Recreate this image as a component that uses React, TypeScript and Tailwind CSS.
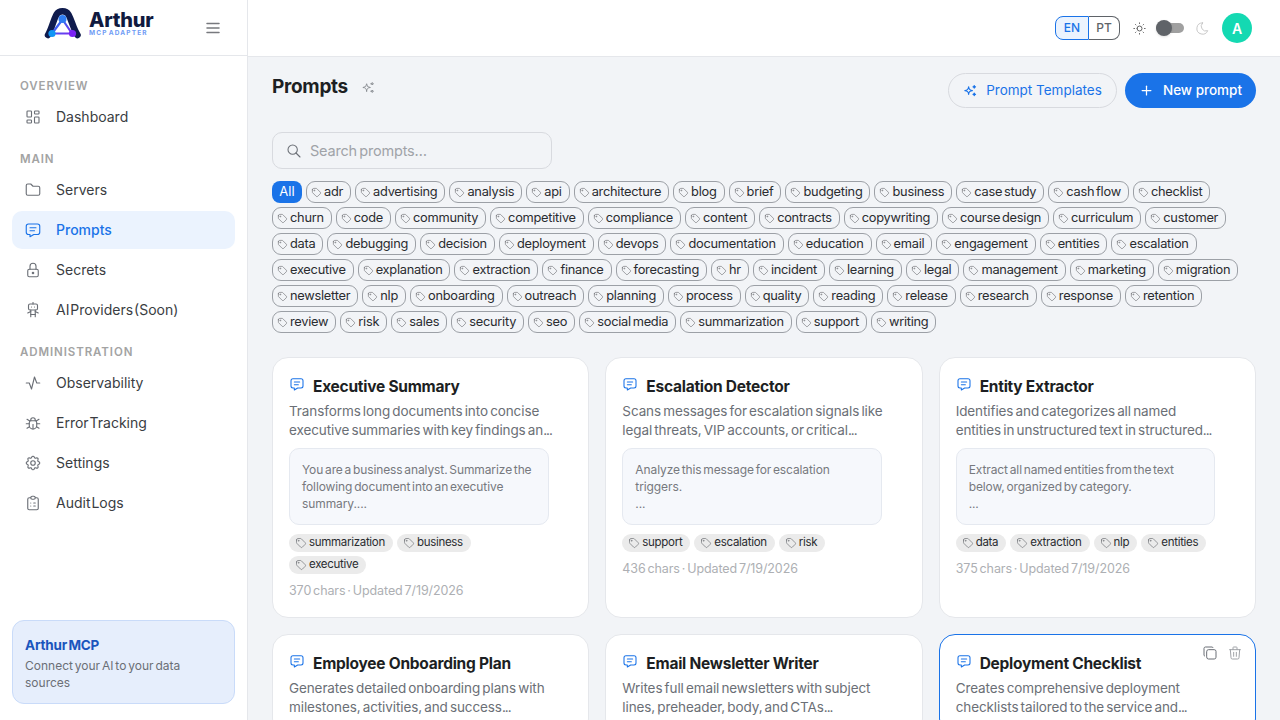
import React from 'react';
import {
  TbLayoutDashboard,
  TbFolder,
  TbMessage,
  TbLock,
  TbRobot,
  TbActivity,
  TbBug,
  TbSettings,
  TbClipboardList,
  TbTag,
  TbSun,
  TbMoon,
  TbSearch,
  TbSparkles,
  TbPlus,
  TbCopy,
  TbTrash,
  TbMenu2,
} from 'react-icons/tb';

const navSections = [
  { label: 'OVERVIEW', items: [{ name: 'Dashboard', icon: TbLayoutDashboard }] },
  {
    label: 'MAIN',
    items: [
      { name: 'Servers', icon: TbFolder },
      { name: 'Prompts', icon: TbMessage, active: true },
      { name: 'Secrets', icon: TbLock },
      { name: 'AI Providers (Soon)', icon: TbRobot },
    ],
  },
  {
    label: 'ADMINISTRATION',
    items: [
      { name: 'Observability', icon: TbActivity },
      { name: 'Error Tracking', icon: TbBug },
      { name: 'Settings', icon: TbSettings },
      { name: 'Audit Logs', icon: TbClipboardList },
    ],
  },
];

const tags = [
  'adr', 'advertising', 'analysis', 'api', 'architecture', 'blog', 'brief', 'budgeting', 'business', 'case study', 'cash flow', 'checklist',
  'churn', 'code', 'community', 'competitive', 'compliance', 'content', 'contracts', 'copywriting', 'course design', 'curriculum', 'customer',
  'data', 'debugging', 'decision', 'deployment', 'devops', 'documentation', 'education', 'email', 'engagement', 'entities', 'escalation',
  'executive', 'explanation', 'extraction', 'finance', 'forecasting', 'hr', 'incident', 'learning', 'legal', 'management', 'marketing', 'migration',
  'newsletter', 'nlp', 'onboarding', 'outreach', 'planning', 'process', 'quality', 'reading', 'release', 'research', 'response', 'retention',
  'review', 'risk', 'sales', 'security', 'seo', 'social media', 'summarization', 'support', 'writing',
];

// desc holds the two visible lines, the second one is cut off with dots
const prompts = [
  {
    title: 'Executive Summary',
    desc: ['Transforms long documents into concise', 'executive summaries with key findings an'],
    body: ['You are a business analyst. Summarize the', 'following document into an executive', 'summary....'],
    tags: ['summarization', 'business', 'executive'],
    meta: '370 chars · Updated 7/19/2026',
  },
  {
    title: 'Escalation Detector',
    desc: ['Scans messages for escalation signals like', 'legal threats, VIP accounts, or critical'],
    body: ['Analyze this message for escalation', 'triggers.', '...'],
    tags: ['support', 'escalation', 'risk'],
    meta: '436 chars · Updated 7/19/2026',
  },
  {
    title: 'Entity Extractor',
    desc: ['Identifies and categorizes all named', 'entities in unstructured text in structured'],
    body: ['Extract all named entities from the text', 'below, organized by category.', '...'],
    tags: ['data', 'extraction', 'nlp', 'entities'],
    meta: '375 chars · Updated 7/19/2026',
  },
  {
    title: 'Employee Onboarding Plan',
    desc: ['Generates detailed onboarding plans with', 'milestones, activities, and success'],
  },
  {
    title: 'Email Newsletter Writer',
    desc: ['Writes full email newsletters with subject', 'lines, preheader, body, and CTAs'],
  },
  {
    title: 'Deployment Checklist',
    desc: ['Creates comprehensive deployment', 'checklists tailored to the service and'],
    hovered: true,
  },
];

const Logo = () => (
  <div className="flex items-start gap-[7px] mb-[10px]">
    <svg width="38" height="32" viewBox="0 0 38 32">
      <defs>
        <linearGradient id="tri" x1="0" y1="0" x2="1" y2="1">
          <stop offset="0" stopColor="#1a7cf0" />
          <stop offset="1" stopColor="#7a2ff0" />
        </linearGradient>
      </defs>
      <path d="M4 28 C8 21 9 14 12.5 7.5 C15 3 22 3 24.5 7.5 C28 14 29 21 33.5 28" fill="none" stroke="#0f1b4d" strokeWidth="6.5" strokeLinecap="round" />
      <path d="M18.5 12.5 L8 26.5 L28 26.5 Z" fill="#ffffff" stroke="url(#tri)" strokeWidth="2.2" strokeLinejoin="round" />
      <circle cx="18.5" cy="12" r="4" fill="#2f7df2" />
      <circle cx="8" cy="26.5" r="3.6" fill="#1196f5" />
      <circle cx="28.5" cy="26.5" r="3.6" fill="#7a22f5" />
    </svg>
    <div className="flex flex-col mt-[5px]">
      <span className="text-[20px] h-[17px] leading-[17px] font-extrabold text-[#111a3f] tracking-[-0.2px]">Arthur</span>
      <span className="text-[6.5px] h-[8px] leading-[8px] font-bold tracking-[1.15px] text-[#6f9cf5]">MCP ADAPTER</span>
    </div>
  </div>
);

const Sidebar = () => (
  <aside className="w-[248px] shrink-0 h-full flex flex-col bg-white border-r border-[#e5e7eb]">
    <div className="h-[56px] shrink-0 border-b border-[#e5e7eb] flex items-center pl-[44px] pr-[25px] justify-between">
      <Logo />
      <TbMenu2 className="text-[#77797e] w-[18px] h-[18px]" />
    </div>
    <nav className="flex-1 px-3 pt-[22px] flex flex-col gap-[15px]">
      {navSections.map((section) => (
        <div key={section.label}>
          <div className="h-4 mb-1 pl-2 text-[11.5px] leading-4 font-semibold tracking-[0.9px] text-[#a3a3a3]">{section.label}</div>
          <div className="flex flex-col gap-[2px]">
            {section.items.map((item) => {
              const Icon = item.icon;
              return (
                <div
                  key={item.name}
                  className={
                    item.active
                      ? 'h-[38px] flex items-center gap-[14px] pl-3 rounded-[10px] bg-[#ebf3fe] text-[#1a73e8] text-[14px] font-medium'
                      : 'h-[38px] flex items-center gap-[14px] pl-3 rounded-[10px] text-[#3a3d42] text-[14px]'
                  }
                >
                  <Icon strokeWidth={1.5} className={item.active ? 'w-[18px] h-[18px] text-[#1a73e8]' : 'w-[18px] h-[18px] text-[#6b6f76]'} />
                  <span className="pb-[1px] [word-spacing:-3px]">{item.name}</span>
                </div>
              );
            })}
          </div>
        </div>
      ))}
    </nav>
    <div className="mx-3 mb-4 h-[84px] rounded-xl border border-[#c9dbf9] bg-[#e6eefc] px-3 pt-[15px]">
      <div className="text-[13.5px] leading-[18px] font-bold text-[#1a55bd] tracking-[-0.2px]">Arthur MCP</div>
      <div className="mt-[3px] text-[12px] leading-[17px] text-[#6b6f76]">Connect your AI to your data sources</div>
    </div>
  </aside>
);

const Header = () => (
  <header className="h-[57px] shrink-0 bg-white border-b border-[#e5e7eb] flex items-center justify-end pr-[28px]">
    <div className="flex h-6 text-[12px] font-medium">
      <span className="w-[34px] flex items-center justify-center bg-[#ebf3fe] text-[#1a73e8] border border-[#1a73e8] rounded-l-lg">EN</span>
      <span className="w-[31px] flex items-center justify-center text-[#5f6368] border border-l-0 border-[#5f6368] rounded-r-lg">PT</span>
    </div>
    <TbSun strokeWidth={1.5} className="ml-[12px] w-[15px] h-[15px] text-[#555]" />
    <div className="ml-[9px] relative w-[28px] h-[10px] rounded-full bg-[#a0a0a0]">
      <div className="absolute left-0 top-[-3px] w-4 h-4 rounded-full bg-[#5f6368] shadow-sm" />
    </div>
    <TbMoon strokeWidth={1.5} className="ml-[11px] w-[15px] h-[15px] text-[#c4c4c4]" />
    <div className="ml-[12px] w-[30px] h-[30px] rounded-full bg-[#14d9b2] text-white flex items-center justify-center text-[14px] font-semibold">A</div>
  </header>
);

const FilterTag = ({ name }: { name: string }) => (
  <span className="h-[22px] flex items-center gap-[2px] pl-[4px] pr-[7px] rounded-[9px] border border-[#9ca0a6] text-[12.8px] text-[#2a2c30] tracking-[-0.25px] whitespace-nowrap">
    <TbTag strokeWidth={1.5} className="w-[11px] h-[11px] text-[#77797e]" />
    {name}
  </span>
);

type Prompt = {
  title: string;
  desc: string[];
  body?: string[];
  tags?: string[];
  meta?: string;
  hovered?: boolean;
};

const PromptCard = ({ prompt }: { prompt: Prompt }) => (
  <div
    className={
      prompt.hovered
        ? 'relative rounded-2xl bg-white border border-[#1a73e8] pt-[19px] pb-[17px] pl-4 pr-10'
        : 'relative rounded-2xl bg-white border border-[#e5e7eb] pt-[19px] pb-[17px] pl-4 pr-10'
    }
  >
    {prompt.hovered && (
      <div className="absolute top-[10px] right-[12px] flex gap-[9px]">
        <TbCopy strokeWidth={1.5} className="w-4 h-4 text-[#6b6f76]" />
        <TbTrash strokeWidth={1.5} className="w-4 h-4 text-[#a0a3a8]" />
      </div>
    )}
    <div className="flex items-center gap-[8px] h-[20px] whitespace-nowrap">
      <TbMessage strokeWidth={1.6} className="w-4 h-4 mt-[-6px] text-[#1a73e8]" />
      <span className="text-[15.5px] font-bold text-[#1d1f23] tracking-[-0.25px] [word-spacing:0px]">{prompt.title}</span>
    </div>
    <div className="mt-[5px] text-[13.5px] leading-[19px] text-[#6b6f76] tracking-[-0.1px] whitespace-nowrap">
      <div>{prompt.desc[0]}</div>
      <div>
        {prompt.desc[1]}
        <span className="tracking-[-1px]">...</span>
      </div>
    </div>
    {prompt.body && (
      <div className="mt-2 h-[77px] w-[259.5px] rounded-[10px] border border-[#e5e9f0] bg-[#f6f8fc] px-[12px] pt-[12px] text-[12px] leading-[17px] text-[#77797e] tracking-[-0.1px] whitespace-nowrap">
        {prompt.body.map((line) => (
          <div key={line}>{line}</div>
        ))}
      </div>
    )}
    {prompt.tags && (
      <div className="mt-[9px] flex flex-wrap gap-x-[4px] gap-y-1">
        {prompt.tags.map((t) => (
          <span key={t} className="h-[18px] flex items-center gap-[2px] pl-[6px] pr-[8px] rounded-full bg-[#ebebeb] text-[11.5px] text-[#2a2c30] tracking-[-0.3px] whitespace-nowrap">
            <TbTag strokeWidth={1.5} className="w-3 h-3 text-[#77797e]" />
            {t}
          </span>
        ))}
      </div>
    )}
    {prompt.meta && <div className="mt-[8px] text-[12.5px] leading-[18px] text-[#adafb3] tracking-[-0.1px] whitespace-nowrap">{prompt.meta}</div>}
  </div>
);

export default function App() {
  return (
    <div className="h-screen w-full flex overflow-hidden bg-[#f2f4f7] font-['Inter',sans-serif] [word-spacing:-1.5px]">
      <Sidebar />
      <div className="flex-1 min-w-0 flex flex-col">
        <Header />
        <main className="flex-1 overflow-hidden pt-4 pl-6 pr-6">
          <div className="flex items-center justify-between h-[35px]">
            <div className="flex items-center gap-[13px] mt-[-6px]">
              <h1 className="text-[19px] font-bold text-[#1d1f23] tracking-[-0.3px]">Prompts</h1>
              <TbSparkles strokeWidth={1.5} className="w-[15px] h-[15px] text-[#8a8d92]" />
            </div>
            <div className="flex gap-2">
              <button className="h-[35px] w-[169px] rounded-full border border-[#d8dadf] flex items-center justify-center gap-2 text-[13.5px] text-[#1a73e8]">
                <TbSparkles className="w-[15px] h-[15px]" />
                Prompt Templates
              </button>
              <button className="h-[35px] w-[131px] rounded-full bg-[#1a73e8] flex items-center justify-center gap-[9px] text-[13.5px] font-medium text-white">
                <TbPlus className="w-[15px] h-[15px]" />
                New prompt
              </button>
            </div>
          </div>
          <div className="mt-6 w-[280px] h-[37px] rounded-[10px] border border-[#d8dadf] flex items-center pl-[13px] gap-[8px] text-[14.5px] text-[#a0a3a8] tracking-[-0.2px]">
            <TbSearch strokeWidth={1.6} className="w-4 h-4 text-[#6b6f76]" />
            Search prompts…
          </div>
          <div className="mt-3 flex flex-wrap gap-1">
            <span className="h-[22px] w-[30px] flex items-center justify-center rounded-lg bg-[#1a73e8] text-white text-[13px]">All</span>
            {tags.map((t) => (
              <FilterTag key={t} name={t} />
            ))}
          </div>
          <div className="mt-6 grid grid-cols-3 gap-4">
            {prompts.map((p) => (
              <PromptCard key={p.title} prompt={p} />
            ))}
          </div>
        </main>
      </div>
    </div>
  );
}
